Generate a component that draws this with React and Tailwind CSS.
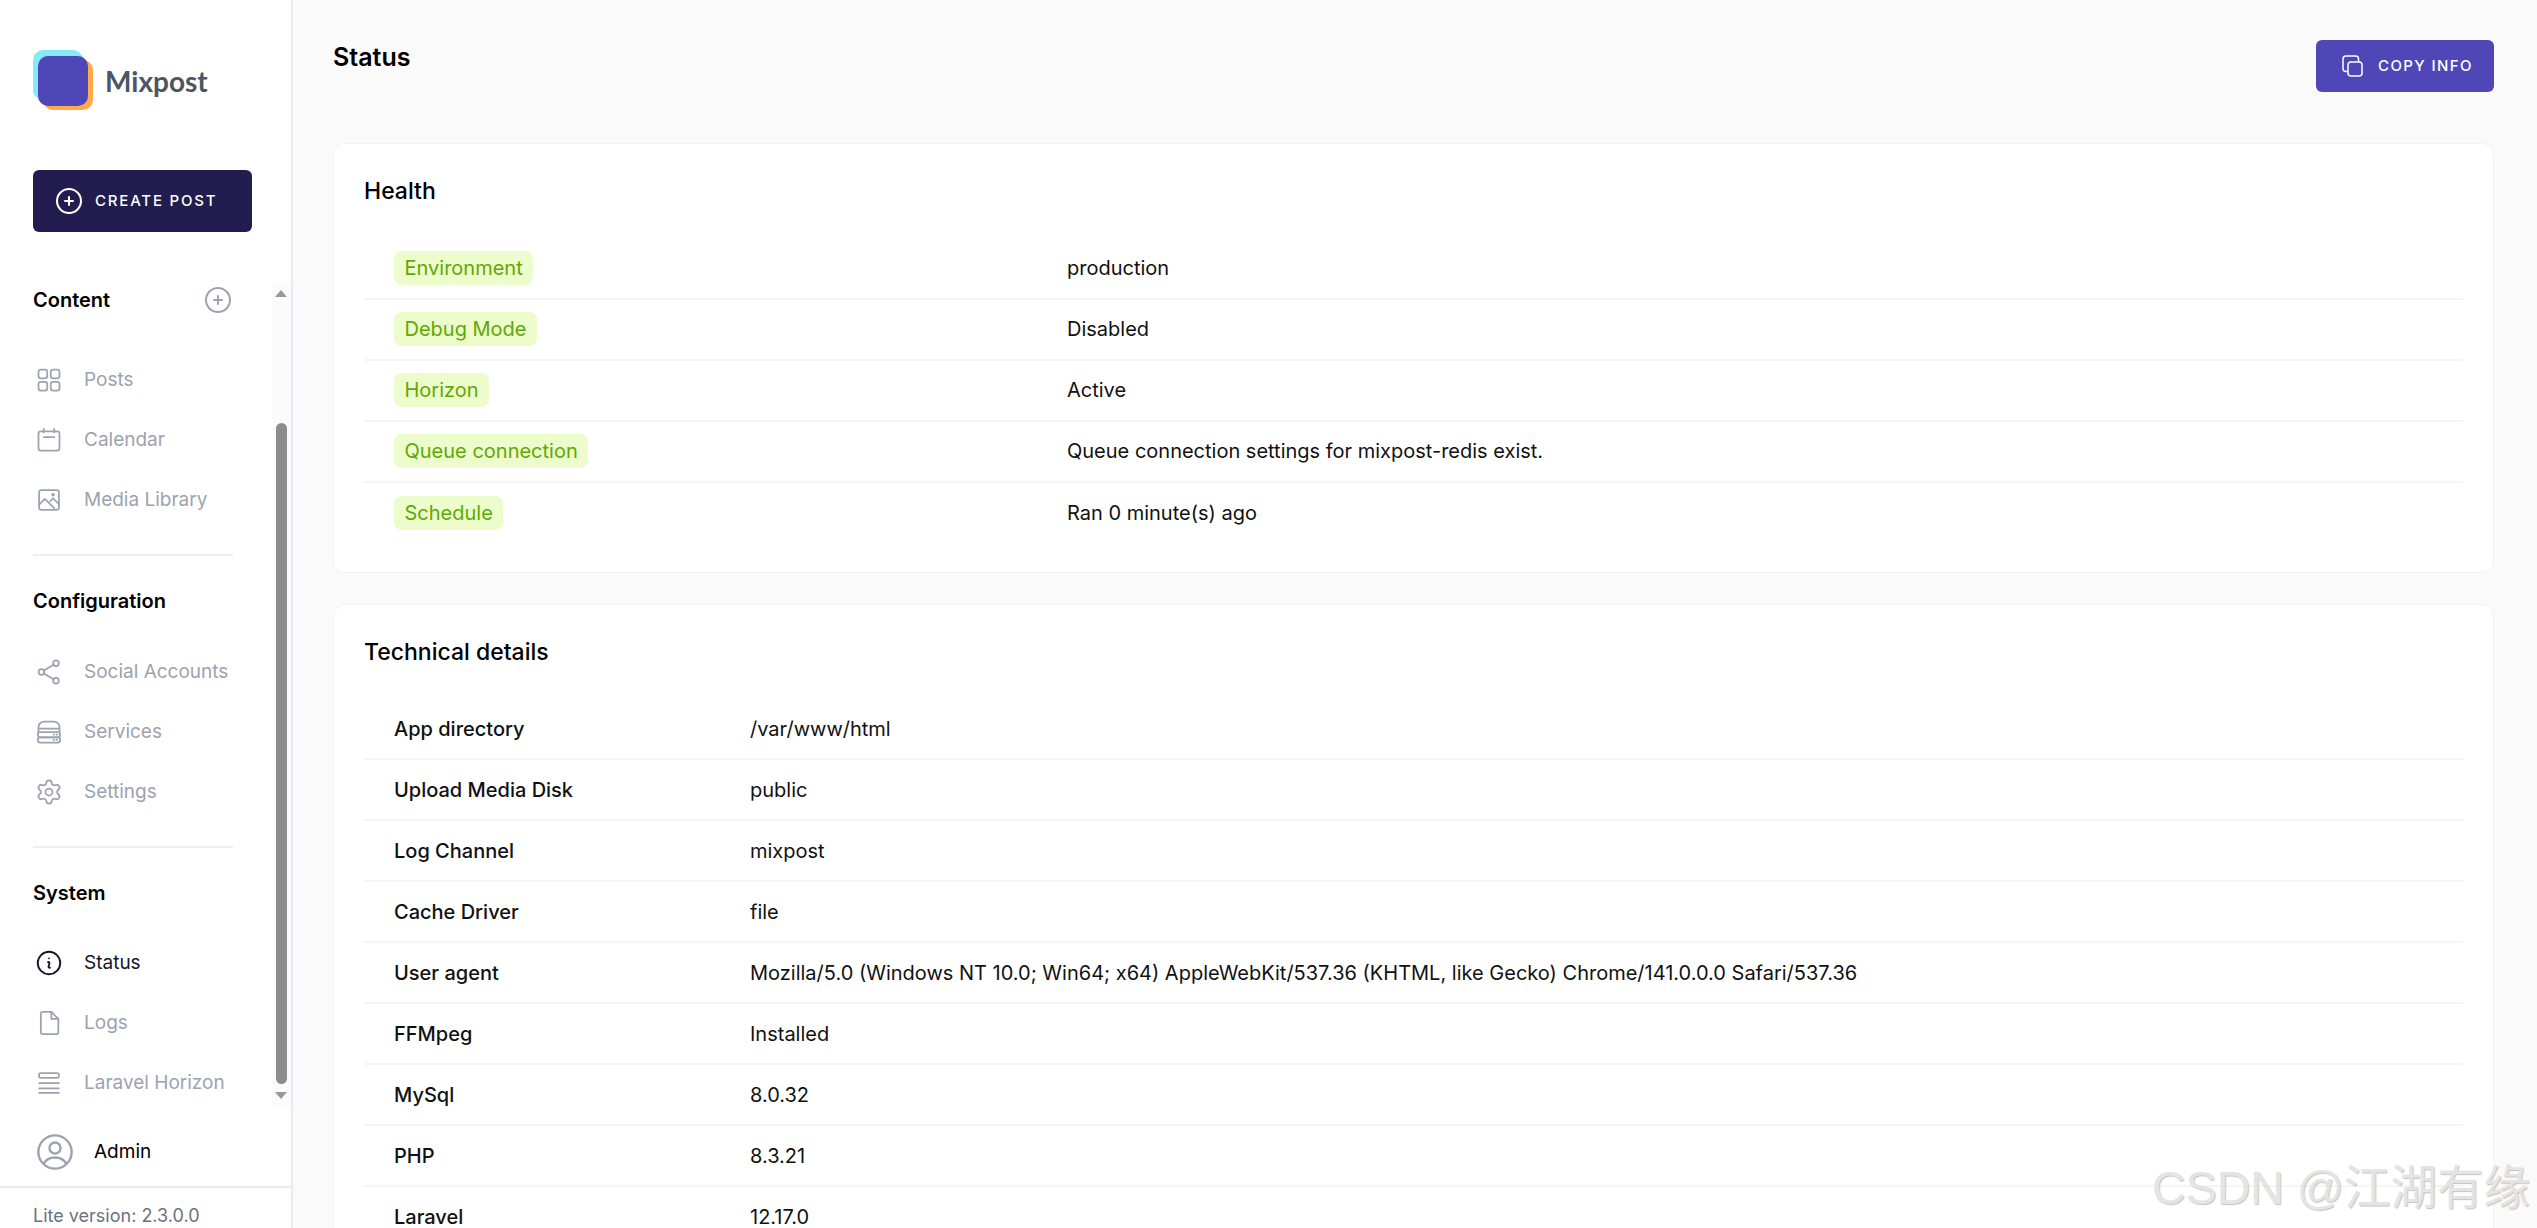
import { Settings } from "lucide-react";

const FONT = "font-['Inter','Liberation_Sans',sans-serif]";

const HEALTH = [
  ["Environment", "production"],
  ["Debug Mode", "Disabled"],
  ["Horizon", "Active"],
  ["Queue connection", "Queue connection settings for mixpost-redis exist."],
  ["Schedule", "Ran 0 minute(s) ago"],
];

const TECHNICAL = [
  ["App directory", "/var/www/html"],
  ["Upload Media Disk", "public"],
  ["Log Channel", "mixpost"],
  ["Cache Driver", "file"],
  ["User agent", "Mozilla/5.0 (Windows NT 10.0; Win64; x64) AppleWebKit/537.36 (KHTML, like Gecko) Chrome/141.0.0.0 Safari/537.36"],
  ["FFMpeg", "Installed"],
  ["MySql", "8.0.32"],
  ["PHP", "8.3.21"],
  ["Laravel", "12.17.0"],
  ["Mixpost", "2.3.0.0"],
];

const Icon = ({ children, className = "w-7 h-7" }) => (
  <svg viewBox="0 0 24 24" fill="none" stroke="currentColor" strokeWidth="1.5" strokeLinecap="round" strokeLinejoin="round" className={className}>
    {children}
  </svg>
);

const PostsIcon = () => (
  <Icon>
    <rect x="3" y="3" width="7.5" height="7.5" rx="2" />
    <rect x="13.5" y="3" width="7.5" height="7.5" rx="2" />
    <rect x="3" y="13.5" width="7.5" height="7.5" rx="2" />
    <rect x="13.5" y="13.5" width="7.5" height="7.5" rx="2" />
  </Icon>
);

const CalendarIcon = () => (
  <Icon>
    <rect x="3" y="4.5" width="18" height="16.5" rx="2" />
    <path d="M7.5 2.5v3M16.5 2.5v3M7.5 9.5h9" />
  </Icon>
);

const MediaIcon = () => (
  <Icon>
    <rect x="3.5" y="3.5" width="17" height="17" rx="2" />
    <path d="M3.5 16l5-5 8 8M13 13l2.5-2.5 5 5" />
    <circle cx="15.5" cy="7.5" r="0.8" />
  </Icon>
);

const ShareIcon = () => (
  <Icon>
    <circle cx="5.5" cy="12" r="2.4" />
    <circle cx="18" cy="4.5" r="2.4" />
    <circle cx="18" cy="19.5" r="2.4" />
    <path d="M7.6 10.8l8.3-5M7.6 13.2l8.3 5" />
  </Icon>
);

const ServicesIcon = () => (
  <Icon>
    <path d="M3 12V8a5 5 0 0 1 5-5h8a5 5 0 0 1 5 5v4" />
    <rect x="2.5" y="12" width="19" height="4.5" rx="2" />
    <rect x="2.5" y="16.5" width="19" height="4.5" rx="2" />
    <path d="M3 9h18M16 14.2h.5M18.5 14.2h.5M16 18.7h.5M18.5 18.7h.5" />
  </Icon>
);

const LogsIcon = () => (
  <Icon>
    <path d="M5 4a1.5 1.5 0 0 1 1.5-1.5H14L20 8.5V20a1.5 1.5 0 0 1-1.5 1.5h-12A1.5 1.5 0 0 1 5 20Z" />
    <path d="M14 2.5V8.5H20" />
  </Icon>
);

const HorizonIcon = () => (
  <Icon>
    <rect x="3.5" y="3.5" width="17" height="4" rx="1.5" />
    <path d="M3.5 12h17M3.5 16.5h17M3.5 20.5h17" />
  </Icon>
);

const InfoIcon = () => (
  <Icon className="w-[30px] h-[30px] -ml-[1px]">
    <path d="M11.25 11.25l.041-.02a.75.75 0 011.063.852l-.708 2.836a.75.75 0 001.063.853l.041-.021M21 12a9 9 0 11-18 0 9 9 0 0118 0zm-9-3.75h.008v.008H12V8.25z" />
  </Icon>
);

const PlusCircle = ({ className }) => (
  <Icon className={className}>
    <path d="M12 9v6m3-3H9m12 0a9 9 0 11-18 0 9 9 0 0118 0z" />
  </Icon>
);

const UserIcon = () => (
  <svg viewBox="0 0 24 24" fill="none" stroke="currentColor" strokeWidth="1.5" className="w-[38px] h-[38px]">
    <circle cx="12" cy="12" r="10.5" />
    <circle cx="12" cy="9.5" r="3.5" />
    <path d="M4.8 19.5c1.5-2.8 4-4 7.2-4s5.7 1.2 7.2 4" />
  </svg>
);

const CopyIcon = () => (
  <svg viewBox="0 0 24 24" fill="none" stroke="currentColor" strokeWidth="1.5" className="w-[24px] h-[24px]">
    <rect x="8" y="8" width="14" height="14" rx="3" />
    <path d="M8 17.5H6a3 3 0 0 1-3-3V5a3 3 0 0 1 3-3h9.5a3 3 0 0 1 3 3v3" />
  </svg>
);

const NavItem = ({ icon, label, active }) => (
  <div className={`flex items-center h-[60px] ${active ? "text-[#111827]" : "text-[#9ca3af]"}`}>
    <span className="w-[49px] flex shrink-0">{icon}</span>
    <span className="text-[19px]">{label}</span>
  </div>
);

const Scrollbar = () => (
  <div className="relative w-[19px] h-[825px] bg-[#fbfbfb]">
    <div className="absolute left-[3px] top-[8px] w-0 h-0 border-x-[6px] border-x-transparent border-b-[7px] border-b-[#999]" />
    <div className="absolute left-[4px] top-[141px] bottom-[23px] w-[11px] rounded-full bg-[#8c8c8c]" />
    <div className="absolute left-[3px] bottom-[8px] w-0 h-0 border-x-[6px] border-x-transparent border-t-[7px] border-t-[#999]" />
  </div>
);

const Sidebar = () => (
  <aside className="w-[293px] h-full shrink-0 bg-white border-r-2 border-[#e9e9ef] flex flex-col overflow-hidden">
    <div className="flex items-center gap-[12px] pl-[33px] pt-[50px] shrink-0">
      <div className="relative w-[60px] h-[60px] shrink-0">
        <div className="absolute left-0 top-0 w-[50px] h-[50px] rounded-[10px] bg-[#85e9f7]" />
        <div className="absolute right-0 bottom-0 w-[50px] h-[50px] rounded-[10px] bg-[#ffa94d]" />
        <div className="absolute left-[5px] top-[6px] w-[50px] h-[50px] rounded-[10px] bg-[#4f46b8]" />
      </div>
      <span className="text-[28px] font-bold text-[#4b5563] font-['Lato',sans-serif] mt-[2px]">Mixpost</span>
    </div>

    <div className="pl-[33px] mt-[60px] shrink-0">
      <div className="w-[219px] h-[62px] rounded-[6px] bg-[#211d4e] text-white flex items-center pl-[20px] gap-[10px]">
        <PlusCircle className="w-[32px] h-[32px]" />
        <span className="text-[15px] font-medium tracking-[1.8px]">CREATE POST</span>
      </div>
    </div>

    <div className="flex mt-[50px] h-[840px] shrink-0">
      <div className="w-[240px] ml-[33px]">
        <div className="flex items-center justify-between h-[36px] pr-[38px]">
          <span className="text-[20px] font-semibold text-black">Content</span>
          <PlusCircle className="w-[32px] h-[32px] text-[#9ca3af]" />
        </div>
        <div className="mt-[32px] pl-[2px]">
          <NavItem icon={<PostsIcon />} label="Posts" />
          <NavItem icon={<CalendarIcon />} label="Calendar" />
          <NavItem icon={<MediaIcon />} label="Media Library" />
        </div>
        <div className="mt-[24px] h-[2px] w-[200px] bg-[#eeeef2]" />
        <div className="mt-[27px] h-[36px] flex items-center">
          <span className="text-[20px] font-semibold text-black">Configuration</span>
        </div>
        <div className="mt-[23px] pl-[2px]">
          <NavItem icon={<ShareIcon />} label="Social Accounts" />
          <NavItem icon={<ServicesIcon />} label="Services" />
          <NavItem icon={<Settings className="w-7 h-7" strokeWidth={1.5} />} label="Settings" />
        </div>
        <div className="mt-[24px] h-[2px] w-[200px] bg-[#eeeef2]" />
        <div className="mt-[27px] h-[36px] flex items-center">
          <span className="text-[20px] font-semibold text-black">System</span>
        </div>
        <div className="mt-[22px] pl-[2px]">
          <NavItem icon={<InfoIcon />} label="Status" active />
          <NavItem icon={<LogsIcon />} label="Logs" />
          <NavItem icon={<HorizonIcon />} label="Laravel Horizon" />
        </div>
      </div>
      <Scrollbar />
    </div>

    <div className="flex items-center pl-[36px] gap-[20px] h-[60px] mb-[4px] shrink-0 text-[#9ca3af]">
      <UserIcon />
      <span className="text-[19px] text-black">Admin</span>
    </div>
    <div className="border-t-2 border-[#e9e9ef] pl-[33px] h-[56px] shrink-0 flex items-center text-[18px] text-[#6b7280]">
      Lite version: 2.3.0.0
    </div>
  </aside>
);

const Card = ({ title, children }) => (
  <section className="bg-white rounded-[12px] border border-[#f3f3f5] px-[30px] pt-[30px] pb-[28px]">
    <h2 className="text-[23px] font-medium text-black">{title}</h2>
    <div className="mt-[30px]">{children}</div>
  </section>
);

const Row = ({ label, value, children, valueClass }) => (
  <div className="flex items-center h-[61px] border-b-2 border-[#f5f5f6] last:border-b-0 pl-[30px] text-[20px] text-[#111111]">
    <div className={valueClass}>{children || label}</div>
    <div>{value}</div>
  </div>
);

export default function App() {
  return (
    <div className={`relative flex h-screen overflow-hidden bg-[#fafafa] ${FONT}`}>
      <Sidebar />
      <main className="flex-1 min-w-0 pl-[40px] pr-[43px]">
        <div className="flex justify-between pt-[40px] h-[143px]">
          <h1 className="text-[25px] font-semibold text-black leading-[35px]">Status</h1>
          <div className="h-[52px] w-[178px] rounded-[6px] bg-[#4f46b8] text-white flex items-center pl-[24px] gap-[14px]">
            <CopyIcon />
            <span className="text-[15px] font-medium tracking-[1.4px]">COPY INFO</span>
          </div>
        </div>

        <div className="flex flex-col gap-[31px]">
          <Card title="Health">
            {HEALTH.map(([label, value]) => (
              <Row key={label} value={value} valueClass="w-[673px] shrink-0">
                <span className="inline-block rounded-[8px] bg-[#ecfccb] text-[#5fa806] px-[10.5px] py-[2px]">{label}</span>
              </Row>
            ))}
          </Card>
          <Card title="Technical details">
            {TECHNICAL.map(([label, value]) => (
              <Row key={label} label={<span className="font-medium">{label}</span>} value={value} valueClass="w-[356px] shrink-0" />
            ))}
          </Card>
        </div>
      </main>

      {/* watermark lies over the page */}
      <div className="absolute right-[7px] top-[1165px] text-[46.5px] leading-none text-[#e4e4e4] [text-shadow:1px_1px_1px_#c4c4c4] font-['Liberation_Sans','Noto_Sans_CJK_SC',sans-serif]">
        CSDN @江湖有缘
      </div>
    </div>
  );
}
